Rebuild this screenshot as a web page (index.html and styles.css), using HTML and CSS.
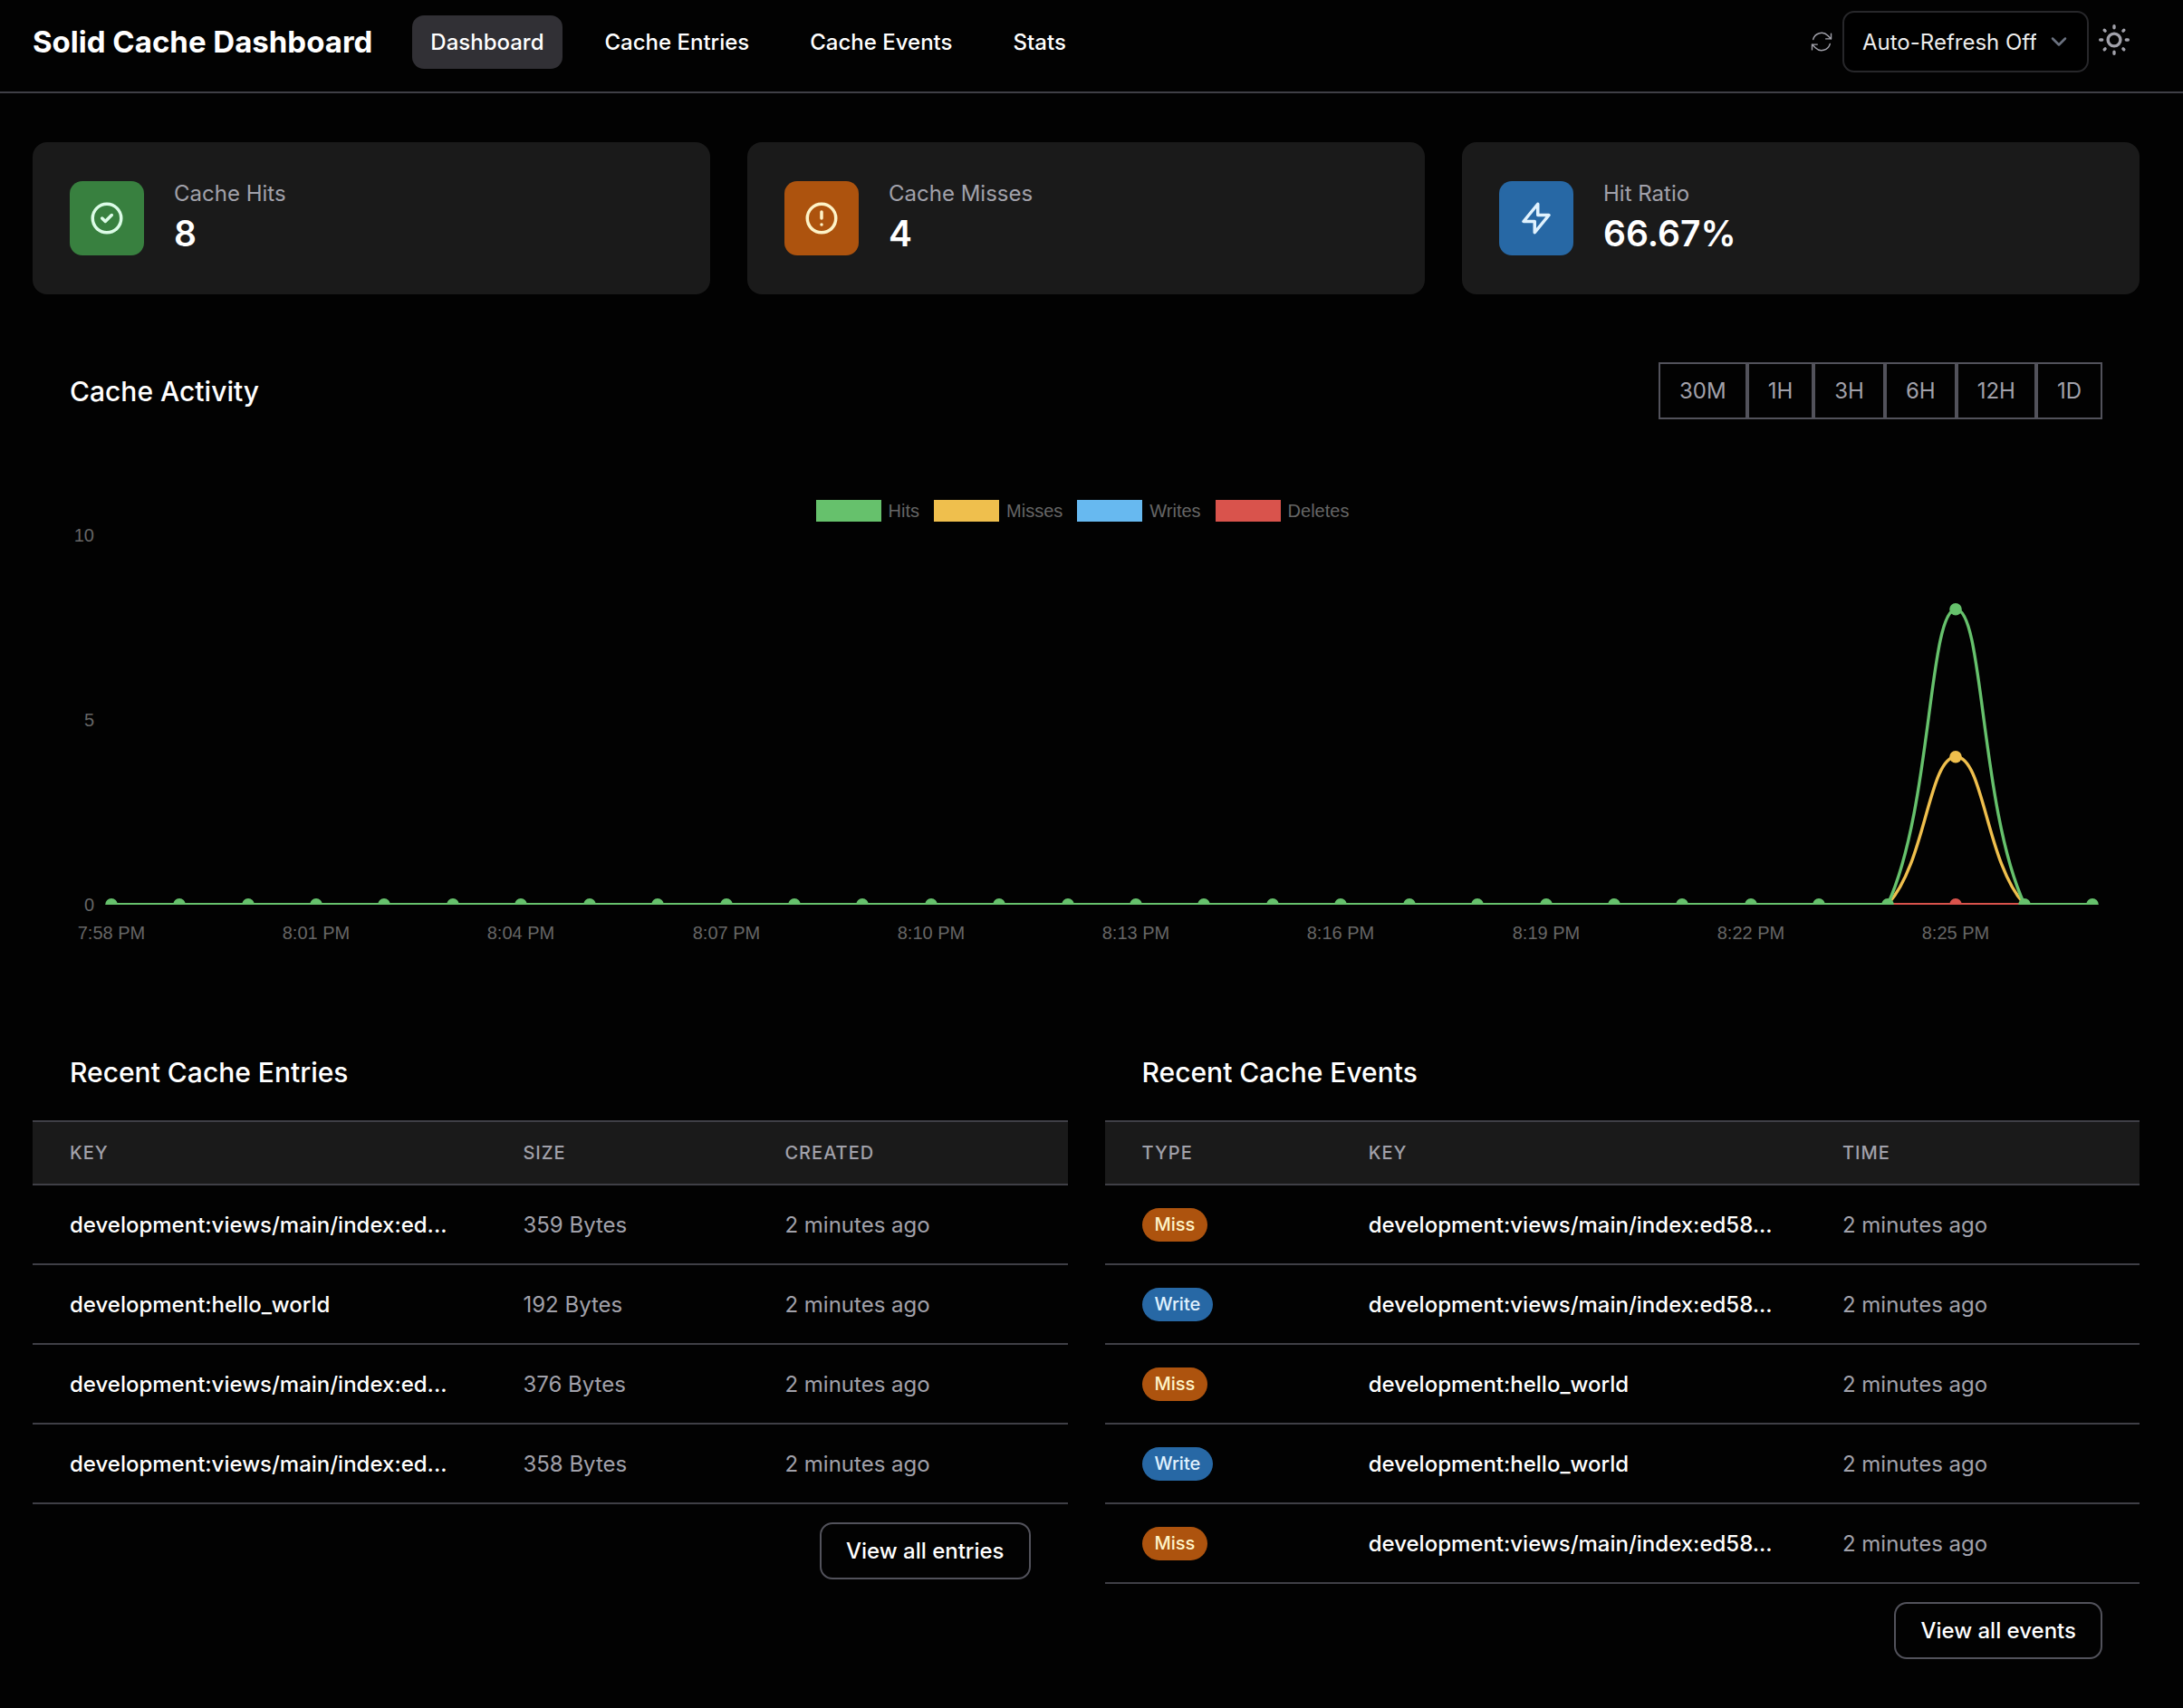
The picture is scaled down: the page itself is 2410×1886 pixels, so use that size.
FILE: index.html
```html
<!DOCTYPE html>
<html lang="en">
<head>
  <meta charset="utf-8">
  <meta name="viewport" content="width=device-width, initial-scale=1">
  <title>Solid Cache Dashboard</title>
  <link rel="stylesheet" href="styles.css">
</head>
<body>
  <header class="topbar">
    <span class="brand">Solid Cache Dashboard</span>
    <nav class="nav">
      <a class="nav-link active" href="#" aria-current="page">Dashboard</a>
      <a class="nav-link" href="#entries">Cache Entries</a>
      <a class="nav-link" href="#events">Cache Events</a>
      <a class="nav-link" href="#stats">Stats</a>
    </nav>
    <div class="tools">
      <svg class="refresh-icon" viewBox="0 0 24 24" aria-hidden="true"><path d="M16.023 9.348h4.992v-.001M2.985 19.644v-4.992m0 0h4.992m-4.993 0 3.181 3.183a8.25 8.25 0 0 0 13.803-3.7M4.031 9.865a8.25 8.25 0 0 1 13.803-3.7l3.181 3.182m0-4.991v4.99"/></svg>
      <div class="select-wrap">
        <select class="select" aria-label="Auto refresh">
          <option>Auto-Refresh Off</option>
          <option>5 seconds</option>
          <option>30 seconds</option>
        </select>
        <svg class="chevron" viewBox="0 0 24 24" aria-hidden="true"><path d="M5 8.5l7 7 7-7"/></svg>
      </div>
      <button class="theme-toggle" type="button" aria-label="Toggle theme">
        <svg viewBox="-18 -18 36 36" aria-hidden="true">
          <circle r="6.9"/>
          <path d="M0-15.3v2M0 15.3v-2M-15.3 0h2M15.3 0h-2M-10.8-10.8l.9.9M10.8-10.8l-.9.9M-10.8 10.8l.9-.9M10.8 10.8l-.9-.9"/>
        </svg>
      </button>
    </div>
  </header>

  <main class="page">
    <section class="stats" id="stats">
      <article class="stat">
        <div class="stat-icon green"><svg viewBox="0 0 24 24" aria-hidden="true"><path d="M9 12l2 2 4-4m6 2a9 9 0 11-18 0 9 9 0 0118 0z"/></svg></div>
        <div class="stat-text"><span class="stat-label">Cache Hits</span><strong class="stat-value">8</strong></div>
      </article>
      <article class="stat">
        <div class="stat-icon orange"><svg viewBox="0 0 24 24" aria-hidden="true"><path d="M12 8v4m0 4h.01M21 12a9 9 0 11-18 0 9 9 0 0118 0z"/></svg></div>
        <div class="stat-text"><span class="stat-label">Cache Misses</span><strong class="stat-value">4</strong></div>
      </article>
      <article class="stat">
        <div class="stat-icon blue"><svg viewBox="0 0 24 24" aria-hidden="true"><path d="M13 10V3L4 14h7v7l9-11h-7z"/></svg></div>
        <div class="stat-text"><span class="stat-label">Hit Ratio</span><strong class="stat-value">66.67%</strong></div>
      </article>
    </section>

    <section class="activity">
      <div class="activity-head">
        <h2 class="title">Cache Activity</h2>
        <div class="ranges">
          <button class="range" type="button">30M</button>
          <button class="range" type="button">1H</button>
          <button class="range" type="button">3H</button>
          <button class="range" type="button">6H</button>
          <button class="range" type="button">12H</button>
          <button class="range" type="button">1D</button>
        </div>
      </div>
      <ul class="legend">
        <li><span class="swatch hits"></span>Hits</li>
        <li><span class="swatch misses"></span>Misses</li>
        <li><span class="swatch writes"></span>Writes</li>
        <li><span class="swatch deletes"></span>Deletes</li>
      </ul>
      <svg class="chart" viewBox="0 0 2244 474" role="img" aria-label="Cache activity by minute">
        <defs>
          <clipPath id="plot"><rect x="38" y="0" width="2206" height="423"/></clipPath>
        </defs>
        <g class="ticks end">
          <text x="27" y="22">10</text>
          <text x="27" y="226">5</text>
          <text x="27" y="430">0</text>
        </g>
        <g class="ticks middle">
          <text x="46" y="461">7:58 PM</text>
          <text x="272" y="461">8:01 PM</text>
          <text x="498" y="461">8:04 PM</text>
          <text x="725" y="461">8:07 PM</text>
          <text x="951" y="461">8:10 PM</text>
          <text x="1177" y="461">8:13 PM</text>
          <text x="1403" y="461">8:16 PM</text>
          <text x="1630" y="461">8:19 PM</text>
          <text x="1856" y="461">8:22 PM</text>
          <text x="2082" y="461">8:25 PM</text>
        </g>
        <g clip-path="url(#plot)">
          <path class="line deletes" d="M46 422.7H2233"/>
          <circle class="dot deletes" cx="2082" cy="422.7" r="6.8"/>
          <path class="line misses" d="M2007 422.7C2049.5 376.8 2052 259.7 2082.5 259.7S2115.5 376.8 2158 422.7"/>
          <circle class="dot misses" cx="2082" cy="259.7" r="6.8"/>
          <path class="line hits" d="M46 422.7H2007C2056 316.3 2052 96.7 2082.5 96.7S2109 316.3 2158 422.7H2233"/>
          <g class="dot hits">
            <circle cx="46" cy="422.7" r="6.8"/><circle cx="121" cy="422.7" r="6.8"/><circle cx="197" cy="422.7" r="6.8"/>
            <circle cx="272" cy="422.7" r="6.8"/><circle cx="347" cy="422.7" r="6.8"/><circle cx="423" cy="422.7" r="6.8"/>
            <circle cx="498" cy="422.7" r="6.8"/><circle cx="574" cy="422.7" r="6.8"/><circle cx="649" cy="422.7" r="6.8"/>
            <circle cx="725" cy="422.7" r="6.8"/><circle cx="800" cy="422.7" r="6.8"/><circle cx="875" cy="422.7" r="6.8"/>
            <circle cx="951" cy="422.7" r="6.8"/><circle cx="1026" cy="422.7" r="6.8"/><circle cx="1102" cy="422.7" r="6.8"/>
            <circle cx="1177" cy="422.7" r="6.8"/><circle cx="1252" cy="422.7" r="6.8"/><circle cx="1328" cy="422.7" r="6.8"/>
            <circle cx="1403" cy="422.7" r="6.8"/><circle cx="1479" cy="422.7" r="6.8"/><circle cx="1554" cy="422.7" r="6.8"/>
            <circle cx="1630" cy="422.7" r="6.8"/><circle cx="1705" cy="422.7" r="6.8"/><circle cx="1780" cy="422.7" r="6.8"/>
            <circle cx="1856" cy="422.7" r="6.8"/><circle cx="1931" cy="422.7" r="6.8"/><circle cx="2007" cy="422.7" r="6.8"/>
            <circle cx="2082" cy="96.7" r="6.8"/><circle cx="2158" cy="422.7" r="6.8"/><circle cx="2233" cy="422.7" r="6.8"/>
          </g>
        </g>
      </svg>
    </section>

    <div class="recent">
      <section id="entries">
        <h2 class="title panel-title">Recent Cache Entries</h2>
        <table class="table entries">
          <colgroup><col class="col-key"><col class="col-size"><col></colgroup>
          <thead>
            <tr><th scope="col">Key</th><th scope="col">Size</th><th scope="col">Created</th></tr>
          </thead>
          <tbody>
            <tr><td class="key">development:views/main/index:ed...</td><td>359 Bytes</td><td>2 minutes ago</td></tr>
            <tr><td class="key">development:hello_world</td><td>192 Bytes</td><td>2 minutes ago</td></tr>
            <tr><td class="key">development:views/main/index:ed...</td><td>376 Bytes</td><td>2 minutes ago</td></tr>
            <tr><td class="key">development:views/main/index:ed...</td><td>358 Bytes</td><td>2 minutes ago</td></tr>
          </tbody>
        </table>
        <div class="panel-foot"><a class="button" href="#entries">View all entries</a></div>
      </section>

      <section id="events">
        <h2 class="title panel-title">Recent Cache Events</h2>
        <table class="table events">
          <colgroup><col class="col-type"><col class="col-key"><col></colgroup>
          <thead>
            <tr><th scope="col">Type</th><th scope="col">Key</th><th scope="col">Time</th></tr>
          </thead>
          <tbody>
            <tr><td><span class="badge miss">Miss</span></td><td class="key">development:views/main/index:ed58...</td><td>2 minutes ago</td></tr>
            <tr><td><span class="badge write">Write</span></td><td class="key">development:views/main/index:ed58...</td><td>2 minutes ago</td></tr>
            <tr><td><span class="badge miss">Miss</span></td><td class="key">development:hello_world</td><td>2 minutes ago</td></tr>
            <tr><td><span class="badge write">Write</span></td><td class="key">development:hello_world</td><td>2 minutes ago</td></tr>
            <tr><td><span class="badge miss">Miss</span></td><td class="key">development:views/main/index:ed58...</td><td>2 minutes ago</td></tr>
          </tbody>
        </table>
        <div class="panel-foot"><a class="button" href="#events">View all events</a></div>
      </section>
    </div>
  </main>
</body>
</html>
```
FILE: styles.css
```css
:root {
  --bg: #020202;
  --surface: #1a1a1a;
  --line: #3f3f46;
  --line-strong: #52525b;
  --text: #ffffff;
  --muted: #a1a1aa;
  --green: #66c16c;
  --yellow: #efbf4d;
  --sky: #67b9f0;
  --red: #d9534c;
  --gap: 41px;
}

* {
  box-sizing: border-box;
}

body {
  margin: 0;
  background: var(--bg);
  color: var(--text);
  font-family: Inter, "Liberation Sans", sans-serif;
  font-size: 24px;
  line-height: 35px;
}

button,
select {
  font: inherit;
}

svg {
  display: block;
  fill: none;
  stroke: currentColor;
  stroke-linecap: round;
  stroke-linejoin: round;
}

/* Top bar */
.topbar {
  display: flex;
  align-items: center;
  gap: 44px;
  padding: 12px 48px 21px 36px;
  border-bottom: 2px solid var(--line);
}

.brand {
  font-size: 33px;
  font-weight: 700;
}

.nav {
  display: flex;
  gap: 27px;
}

.nav-link {
  padding: 12px 20px;
  border-radius: 13px;
  color: var(--text);
  font-weight: 500;
  text-decoration: none;
}

.nav-link.active {
  background: #313035;
}

.tools {
  display: flex;
  align-items: center;
  margin-left: auto;
  color: var(--muted);
}

.refresh-icon {
  width: 28px;
  height: 28px;
  margin-right: 9px;
  stroke-width: 1.2;
}

.select-wrap {
  position: relative;
}

.select {
  display: block;
  width: 272px;
  height: 68px;
  padding: 0 56px 0 20px;
  appearance: none;
  border: 2px solid #27272a;
  border-radius: 13px;
  background: #000000;
  color: #ededed;
}

.chevron {
  position: absolute;
  top: 22px;
  right: 21px;
  width: 24px;
  height: 24px;
  color: #6b7280;
  stroke-width: 2.5;
  pointer-events: none;
}

.theme-toggle {
  padding: 0 10px 4px;
  border: 0;
  background: none;
  color: var(--muted);
}

.theme-toggle svg {
  width: 36px;
  height: 36px;
  stroke-width: 3.4;
}

/* Page */
.page {
  display: grid;
  gap: var(--gap);
  padding: 54px 48px 52px 36px;
}

.title {
  margin: 0;
  font-size: 30px;
  font-weight: 500;
  line-height: 36px;
}

/* Stat cards */
.stats {
  display: grid;
  grid-template-columns: repeat(3, 1fr);
  gap: var(--gap);
}

.stat {
  display: flex;
  align-items: center;
  gap: 33px;
  padding: 43px 41px;
  border-radius: 16px;
  background: var(--surface);
}

.stat-icon {
  padding: 20px;
  border-radius: 14px;
}

.stat-icon svg {
  width: 42px;
  height: 42px;
  stroke-width: 2;
}

.stat-icon.green {
  background: #38803f;
  color: #dcfce7;
}

.stat-icon.orange {
  background: #ad530e;
  color: #fef3c7;
}

.stat-icon.blue {
  background: #2768a5;
  color: #e0f2fe;
}

.stat-text {
  display: flex;
  flex-direction: column;
  gap: 6px;
}

.stat-label {
  color: var(--muted);
  font-weight: 400;
  line-height: 28px;
}

.stat-value {
  font-size: 39px;
  font-weight: 600;
  line-height: 48px;
}

/* Activity chart */
.activity {
  padding: 34px 41px 41px;
}

.activity-head {
  display: flex;
  align-items: center;
  justify-content: space-between;
}

.ranges {
  display: flex;
}

.range {
  padding: 12px 21px;
  border: 2px solid var(--line-strong);
  background: transparent;
  color: var(--muted);
  font-weight: 400;
}

.legend {
  display: flex;
  justify-content: center;
  gap: 16px;
  margin: 89px 0 0;
  padding: 0 8px 0 0;
  color: #666666;
  font-family: "Liberation Sans", Arial, sans-serif;
  font-size: 20px;
  line-height: 24px;
  list-style: none;
}

.legend li {
  display: flex;
  gap: 8px;
}

.swatch {
  width: 72px;
  height: 24px;
}

.swatch.hits {
  background: var(--green);
}

.swatch.misses {
  background: var(--yellow);
}

.swatch.writes {
  background: var(--sky);
}

.swatch.deletes {
  background: var(--red);
}

.chart {
  width: 100%;
  height: auto;
}

.ticks {
  fill: #666666;
  stroke: none;
  font-family: "Liberation Sans", Arial, sans-serif;
  font-size: 20px;
}

.ticks.end {
  text-anchor: end;
}

.ticks.middle {
  text-anchor: middle;
}

.line {
  stroke-width: 3.4;
}

.line.hits {
  stroke: var(--green);
}

.line.misses {
  stroke: var(--yellow);
}

.line.deletes {
  stroke: var(--red);
}

.dot {
  stroke: none;
}

.dot.hits {
  fill: var(--green);
}

.dot.misses {
  fill: var(--yellow);
}

.dot.deletes {
  fill: var(--red);
}

/* Recent tables */
.recent {
  display: grid;
  grid-template-columns: repeat(2, minmax(0, 1fr));
  gap: var(--gap);
}

.panel-title {
  padding: 34px 41px 35px;
}

.table {
  width: 100%;
  border-collapse: separate;
  border-spacing: 0;
  table-layout: fixed;
}

.table th,
.table td {
  padding: 0 41px;
  border-bottom: 2px solid var(--line);
  text-align: left;
  white-space: nowrap;
}

.table th {
  height: 72px;
  border-top: 2px solid var(--line);
  background: var(--surface);
  color: var(--muted);
  font-size: 20px;
  font-weight: 500;
  letter-spacing: 1px;
  text-transform: uppercase;
}

.table td {
  height: 88px;
  color: var(--muted);
}

.table .key {
  color: var(--text);
  font-weight: 500;
}

.entries .col-key {
  width: 43.8%;
}

.entries .col-size {
  width: 25.3%;
}

.events .col-type {
  width: 21.9%;
}

.events .col-key {
  width: 45.8%;
}

.badge {
  display: inline-block;
  padding: 0 14px;
  border-radius: 19px;
  font-size: 20px;
  font-weight: 500;
  line-height: 37px;
  vertical-align: middle;
}

.badge.miss {
  background: #ad530e;
  color: #fef3c7;
}

.badge.write {
  background: #2768a5;
  color: #e0f2fe;
}

.panel-foot {
  display: flex;
  justify-content: flex-end;
  padding: 20px 41px 0;
}

.button {
  padding: 12px 27px;
  border: 2px solid var(--line-strong);
  border-radius: 14px;
  color: var(--text);
  font-weight: 500;
  text-decoration: none;
}
```
